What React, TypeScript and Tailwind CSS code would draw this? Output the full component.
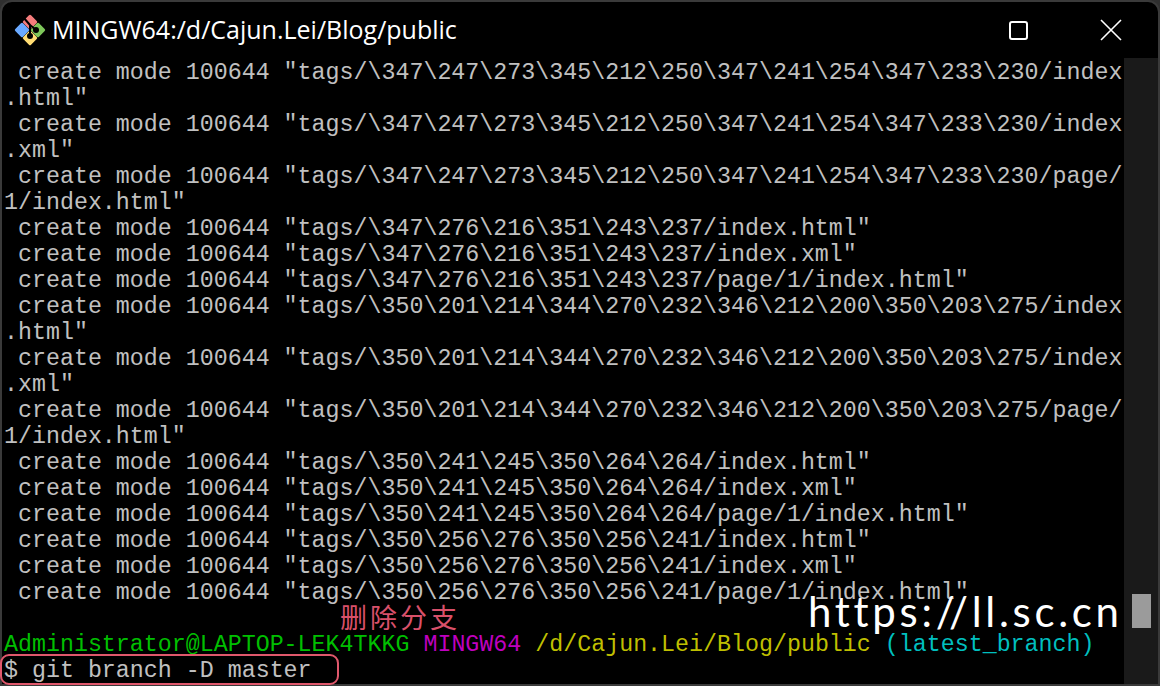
const lines = [
  ' create mode 100644 "tags/\\347\\247\\273\\345\\212\\250\\347\\241\\254\\347\\233\\230/index',
  '.html"',
  ' create mode 100644 "tags/\\347\\247\\273\\345\\212\\250\\347\\241\\254\\347\\233\\230/index',
  '.xml"',
  ' create mode 100644 "tags/\\347\\247\\273\\345\\212\\250\\347\\241\\254\\347\\233\\230/page/',
  '1/index.html"',
  ' create mode 100644 "tags/\\347\\276\\216\\351\\243\\237/index.html"',
  ' create mode 100644 "tags/\\347\\276\\216\\351\\243\\237/index.xml"',
  ' create mode 100644 "tags/\\347\\276\\216\\351\\243\\237/page/1/index.html"',
  ' create mode 100644 "tags/\\350\\201\\214\\344\\270\\232\\346\\212\\200\\350\\203\\275/index',
  '.html"',
  ' create mode 100644 "tags/\\350\\201\\214\\344\\270\\232\\346\\212\\200\\350\\203\\275/index',
  '.xml"',
  ' create mode 100644 "tags/\\350\\201\\214\\344\\270\\232\\346\\212\\200\\350\\203\\275/page/',
  '1/index.html"',
  ' create mode 100644 "tags/\\350\\241\\245\\350\\264\\264/index.html"',
  ' create mode 100644 "tags/\\350\\241\\245\\350\\264\\264/index.xml"',
  ' create mode 100644 "tags/\\350\\241\\245\\350\\264\\264/page/1/index.html"',
  ' create mode 100644 "tags/\\350\\256\\276\\350\\256\\241/index.html"',
  ' create mode 100644 "tags/\\350\\256\\276\\350\\256\\241/index.xml"',
  ' create mode 100644 "tags/\\350\\256\\276\\350\\256\\241/page/1/index.html"',
];

function GitIcon() {
  return (
    <svg width="32" height="32" viewBox="0 0 32 32" className="shrink-0">
      <rect x="10.5" y="2.5" width="11" height="11" rx="1.5" fill="#f47c7c" transform="rotate(45 16 8)" />
      <rect x="2.5" y="10.5" width="11" height="11" rx="1.5" fill="#6aa9ff" transform="rotate(45 8 16)" />
      <rect x="18.5" y="10.5" width="11" height="11" rx="1.5" fill="#7dc65a" transform="rotate(45 24 16)" />
      <rect x="10.5" y="18.5" width="11" height="11" rx="1.5" fill="#ffdc73" transform="rotate(45 16 24)" />
      <path d="M9 3 L16 11 L16 21 M16 11 L22 16" stroke="#000" strokeWidth="2" fill="none" />
      <circle cx="16" cy="22" r="3" fill="#000" />
      <circle cx="22" cy="16" r="3" fill="#000" />
    </svg>
  );
}

export default function App() {
  return (
    <div className="relative flex h-[686px] w-[1160px] flex-col overflow-hidden bg-[#2f2f2f]">
      <div className="flex h-full flex-col overflow-hidden rounded-t-[12px] border-2 border-[#3a3a3a] bg-black">
        <div className="flex h-[56px] shrink-0 items-center pl-[12px] text-white">
          <GitIcon />
          <span className="ml-[6px] font-['Open_Sans','Noto_Sans',sans-serif] text-[25px]">MINGW64:/d/Cajun.Lei/Blog/public</span>
          <div className="ml-auto flex items-center">
            <div className="mr-[72px] h-[19px] w-[19px] rounded-[3px] border-2 border-white" />
            <svg width="22" height="22" viewBox="0 0 22 22" className="mr-[36px]">
              <path d="M1 1 L21 21 M21 1 L1 21" stroke="#fff" strokeWidth="1.6" />
            </svg>
          </div>
        </div>
        <div className="flex min-h-0 flex-1">
          <div className="w-[1122px] pt-[2px] pl-[2px] font-['Liberation_Mono',monospace] text-[23.3px] leading-[26px] whitespace-pre text-[#c0c0c0]">
            {lines.map((l, i) => (
              <div key={i} className="h-[26px]">{l}</div>
            ))}
            <div className="h-[26px]" />
            <div className="h-[26px]">
              <span className="text-[#00bf00]">Administrator@LAPTOP-LEK4TKKG</span>{' '}
              <span className="text-[#bf00bf]">MINGW64</span>{' '}
              <span className="text-[#bfbf00]">/d/Cajun.Lei/Blog/public</span>{' '}
              <span className="text-[#00bfbf]">(latest_branch)</span>
            </div>
            <div className="h-[26px]">$ git branch -D master</div>
          </div>
          <div className="flex-1 bg-[#1a1a1a] pt-[536px] pl-[8px]">
            <div className="h-[34px] w-[19px] bg-[#9b9b9b]" />
          </div>
        </div>
      </div>
      <div className="absolute top-[654px] left-[0px] h-[31px] w-[339px] rounded-[9px] border-2 border-[#e0586c]" />
      <div className="absolute top-[600px] left-[340px] font-['Noto_Sans_CJK_SC',sans-serif] text-[27px] leading-[34px] tracking-[3px] text-[#d9506a]">删除分支</div>
      <div className="absolute top-[585px] left-[808px] font-['Lato',sans-serif] text-[42px] leading-[52px] tracking-[3.7px] text-white">https://ll.sc.cn</div>
    </div>
  );
}
